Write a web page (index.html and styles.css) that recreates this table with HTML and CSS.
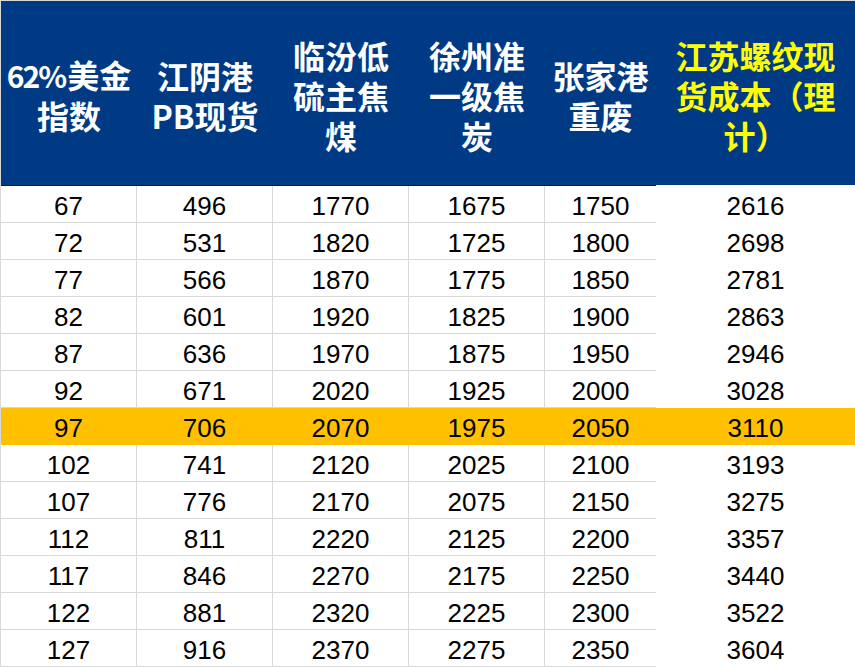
FILE: index.html
```html
<!DOCTYPE html>
<html lang="zh-CN">
<head>
<meta charset="utf-8">
<title>成本表</title>
<link rel="stylesheet" href="styles.css">
</head>
<body>
<div class="sheet">
  <div class="hd"><div class="ht"><span class="pct">62%</span>美金<br>指数</div></div>
  <div class="hd"><div class="ht">江阴港<br>PB现货</div></div>
  <div class="hd"><div class="ht">临汾低<br>硫主焦<br>煤</div></div>
  <div class="hd"><div class="ht">徐州准<br>一级焦<br>炭</div></div>
  <div class="hd"><div class="ht">张家港<br>重废</div></div>
  <div class="hd hd-last"><div class="ht">江苏螺纹现<br>货成本（理<br>计）</div></div>

  <div class="c">67</div><div class="c">496</div><div class="c">1770</div><div class="c">1675</div><div class="c c5">1750</div><div class="c c6">2616</div>
  <div class="c">72</div><div class="c">531</div><div class="c">1820</div><div class="c">1725</div><div class="c c5">1800</div><div class="c c6">2698</div>
  <div class="c">77</div><div class="c">566</div><div class="c">1870</div><div class="c">1775</div><div class="c c5">1850</div><div class="c c6">2781</div>
  <div class="c">82</div><div class="c">601</div><div class="c">1920</div><div class="c">1825</div><div class="c c5">1900</div><div class="c c6">2863</div>
  <div class="c">87</div><div class="c">636</div><div class="c">1970</div><div class="c">1875</div><div class="c c5">1950</div><div class="c c6">2946</div>
  <div class="c">92</div><div class="c">671</div><div class="c">2020</div><div class="c">1925</div><div class="c c5">2000</div><div class="c c6">3028</div>
  <div class="c hl">97</div><div class="c hl">706</div><div class="c hl">2070</div><div class="c hl">1975</div><div class="c c5 hl">2050</div><div class="c c6 hl6">3110</div>
  <div class="c">102</div><div class="c">741</div><div class="c">2120</div><div class="c">2025</div><div class="c c5">2100</div><div class="c c6">3193</div>
  <div class="c">107</div><div class="c">776</div><div class="c">2170</div><div class="c">2075</div><div class="c c5">2150</div><div class="c c6">3275</div>
  <div class="c">112</div><div class="c">811</div><div class="c">2220</div><div class="c">2125</div><div class="c c5">2200</div><div class="c c6">3357</div>
  <div class="c">117</div><div class="c">846</div><div class="c">2270</div><div class="c">2175</div><div class="c c5">2250</div><div class="c c6">3440</div>
  <div class="c">122</div><div class="c">881</div><div class="c">2320</div><div class="c">2225</div><div class="c c5">2300</div><div class="c c6">3522</div>
  <div class="c">127</div><div class="c">916</div><div class="c">2370</div><div class="c">2275</div><div class="c c5">2350</div><div class="c c6">3604</div>
</div>
</body>
</html>
```

FILE: styles.css
```css
html, body {
  margin: 0;
  padding: 0;
  background: #ffffff;
}

.sheet {
  width: 855px;
  box-sizing: border-box;
  border-left: 1px solid #d9d9d9;
  border-top: 1px solid #d9d9d9;
  display: grid;
  grid-template-columns: 136px 136px 136px 136px 111px 199px;
  grid-auto-rows: 37px;
  grid-template-rows: 185px;
}

.hd {
  box-sizing: border-box;
  background: #003a85;
  color: #ffffff;
  font-family: "Noto Sans CJK SC", "Noto Sans", sans-serif;
  font-weight: 700;
  font-size: 32px;
  line-height: 40px;
  display: flex;
  align-items: center;
  justify-content: center;
  padding-top: 3px;
  border-bottom: 1px solid #1a1a1a;
}

.ht {
  text-align: center;
  white-space: nowrap;
}

.pct {
  font-size: 30px;
  letter-spacing: -2px;
  margin-right: 2px;
}

.hd-last {
  color: #ffff00;
  border-bottom: 1px solid #ffffff;
}

.c {
  box-sizing: border-box;
  font-family: "Liberation Sans", Arial, sans-serif;
  font-size: 26px;
  color: #000000;
  display: flex;
  align-items: center;
  justify-content: center;
  padding-top: 4px;
  border-right: 1px solid #d9d9d9;
  border-bottom: 1px solid #d9d9d9;
}

.c5 {
  border-right: none;
}

.c6 {
  border-right: none;
  border-bottom: none;
}

.hl {
  background: #ffc000;
  border-color: #ffc000;
}

.hl6 {
  background: #ffc000;
}
```
